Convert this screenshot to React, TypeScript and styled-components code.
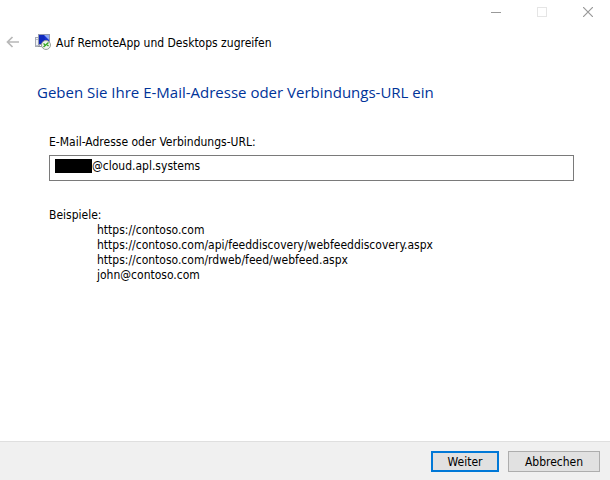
import React, { useState } from "react";
import styled, { createGlobalStyle } from "styled-components";

const GlobalStyle = createGlobalStyle`
  * { box-sizing: border-box; }
  body { margin: 0; background: #fff; }
  body, button, input { font-family: "DejaVu Sans Condensed", "Noto Sans", sans-serif; font-size: 12px; line-height: 15px; color: #000; }
`;

const Dialog = styled.div`
  display: flex;
  flex-direction: column;
  min-height: 100vh;
`;

const TitleBar = styled.div`
  display: flex;
  justify-content: flex-end;
  height: 24px;
`;

const CaptionButton = styled.button<{ $color?: string }>`
  display: flex;
  align-items: center;
  justify-content: center;
  width: 46px;
  height: 24px;
  padding: 0;
  border: 0;
  background: transparent;
  color: ${(p) => p.$color ?? "#999"};

  &:last-child { width: 45px; }
`;

const Header = styled.header`
  display: flex;
  align-items: center;
  height: 36px;
  padding-left: 6px;
`;

const BackButton = styled.button`
  display: flex;
  width: 14px;
  margin-right: 15px;
  padding: 0;
  border: 0;
  background: transparent;
`;

const WizardTitle = styled.span`
  margin-left: 5px;
  padding-top: 2px;
`;

const Main = styled.main`
  flex: 1;
  padding: 20px 36px 24px 37px;
`;

const Heading = styled.h1`
  margin: 0 0 31px;
  font-family: "Open Sans", "Noto Sans", sans-serif;
  font-size: 15px;
  line-height: 24px;
  font-weight: 400;
  color: #003399;
`;

const Form = styled.div`
  padding-left: 12px;
`;

const Label = styled.label`
  display: block;
  margin-bottom: 5px;
`;

const Field = styled.div`
  display: flex;
  align-items: flex-start;
  height: 26px;
  padding: 3px 5px;
  border: 1px solid #7a7a7a;
`;

const Redaction = styled.span`
  width: 37px;
  height: 14px;
  background: #000;
`;

const Input = styled.input`
  flex: 1;
  min-width: 0;
  height: 15px;
  padding: 0;
  border: 0;
  outline: 0;
  background: transparent;
`;

const Examples = styled.section`
  margin-top: 27px;
`;

const ExampleList = styled.ul`
  margin: 0;
  padding: 0 0 0 48px;
  list-style: none;
`;

const Footer = styled.footer`
  display: flex;
  justify-content: flex-end;
  gap: 9px;
  padding: 9px 10px 8px;
  border-top: 1px solid #dfdfdf;
  background: #f0f0f0;
`;

const Button = styled.button<{ $primary?: boolean; $width: number }>`
  display: flex;
  align-items: center;
  justify-content: center;
  width: ${(p) => p.$width}px;
  height: 21px;
  padding: 2px 0 0;
  border: ${(p) => (p.$primary ? "2px solid #0078d7" : "1px solid #adadad")};
  background: #e1e1e1;
`;

const examples = [
  "https://contoso.com",
  "https://contoso.com/api/feeddiscovery/webfeeddiscovery.aspx",
  "https://contoso.com/rdweb/feed/webfeed.aspx",
  "john@contoso.com",
];

const RemoteIcon = () => (
  <svg width="16" height="16" viewBox="0 0 16 16" aria-hidden="true">
    <rect x="0.5" y="3.5" width="4" height="9" fill="#eef0f4" stroke="#a6abb5" />
    <path d="M1 5.5h3M1 11.5h3" stroke="#b8bcc6" />
    <rect x="3.5" y="0.5" width="11" height="10" fill="#1732d1" stroke="#9298ad" />
    <path d="M9 1h5v5z" fill="#8fa9f4" />
    <path d="M4 1h5l2 9H4z" fill="#1029bd" />
    <path d="M3 12.5h6" stroke="#8f949c" />
    <circle cx="11" cy="11" r="4.5" fill="#f0f3ef" stroke="#989d98" />
    <path d="M8.5 9.5l2 1.7-2 1.8M13.5 8.5l-2 1.8 2 1.8" fill="none" stroke="#30a51c" strokeWidth="1.3" />
  </svg>
);

export default function App() {
  const [address, setAddress] = useState("@cloud.apl.systems");
  return (
    <Dialog>
      <GlobalStyle />
      <TitleBar>
        <CaptionButton aria-label="Minimieren">
          <svg width="10" height="10" viewBox="0 0 10 10"><path d="M0 5.5h10" stroke="currentColor" /></svg>
        </CaptionButton>
        <CaptionButton aria-label="Maximieren" $color="#e5e5e5" disabled>
          <svg width="10" height="10" viewBox="0 0 10 10"><rect x="0.5" y="0.5" width="9" height="9" fill="none" stroke="currentColor" /></svg>
        </CaptionButton>
        <CaptionButton aria-label="Schließen">
          <svg width="10" height="10" viewBox="0 0 10 10"><path d="M0 0l10 10M10 0L0 10" stroke="currentColor" strokeWidth="1.2" /></svg>
        </CaptionButton>
      </TitleBar>
      <Header>
        <BackButton aria-label="Zurück" disabled>
          <svg width="14" height="12" viewBox="0 0 14 12"><path d="M13 6H2M6.5 1L1.5 6l5 5" fill="none" stroke="#b8b8b8" strokeWidth="1.7" /></svg>
        </BackButton>
        <RemoteIcon />
        <WizardTitle>Auf RemoteApp und Desktops zugreifen</WizardTitle>
      </Header>
      <Main>
        <Heading>Geben Sie Ihre E-Mail-Adresse oder Verbindungs-URL ein</Heading>
        <Form>
          <Label htmlFor="address">E-Mail-Adresse oder Verbindungs-URL:</Label>
          <Field>
            <Redaction />
            <Input id="address" type="text" value={address} onChange={(e) => setAddress(e.target.value)} />
          </Field>
          <Examples>
            Beispiele:
            <ExampleList>
              {examples.map((example) => <li key={example}>{example}</li>)}
            </ExampleList>
          </Examples>
        </Form>
      </Main>
      <Footer>
        <Button $primary $width={68}>Weiter</Button>
        <Button $width={92}>Abbrechen</Button>
      </Footer>
    </Dialog>
  );
}
